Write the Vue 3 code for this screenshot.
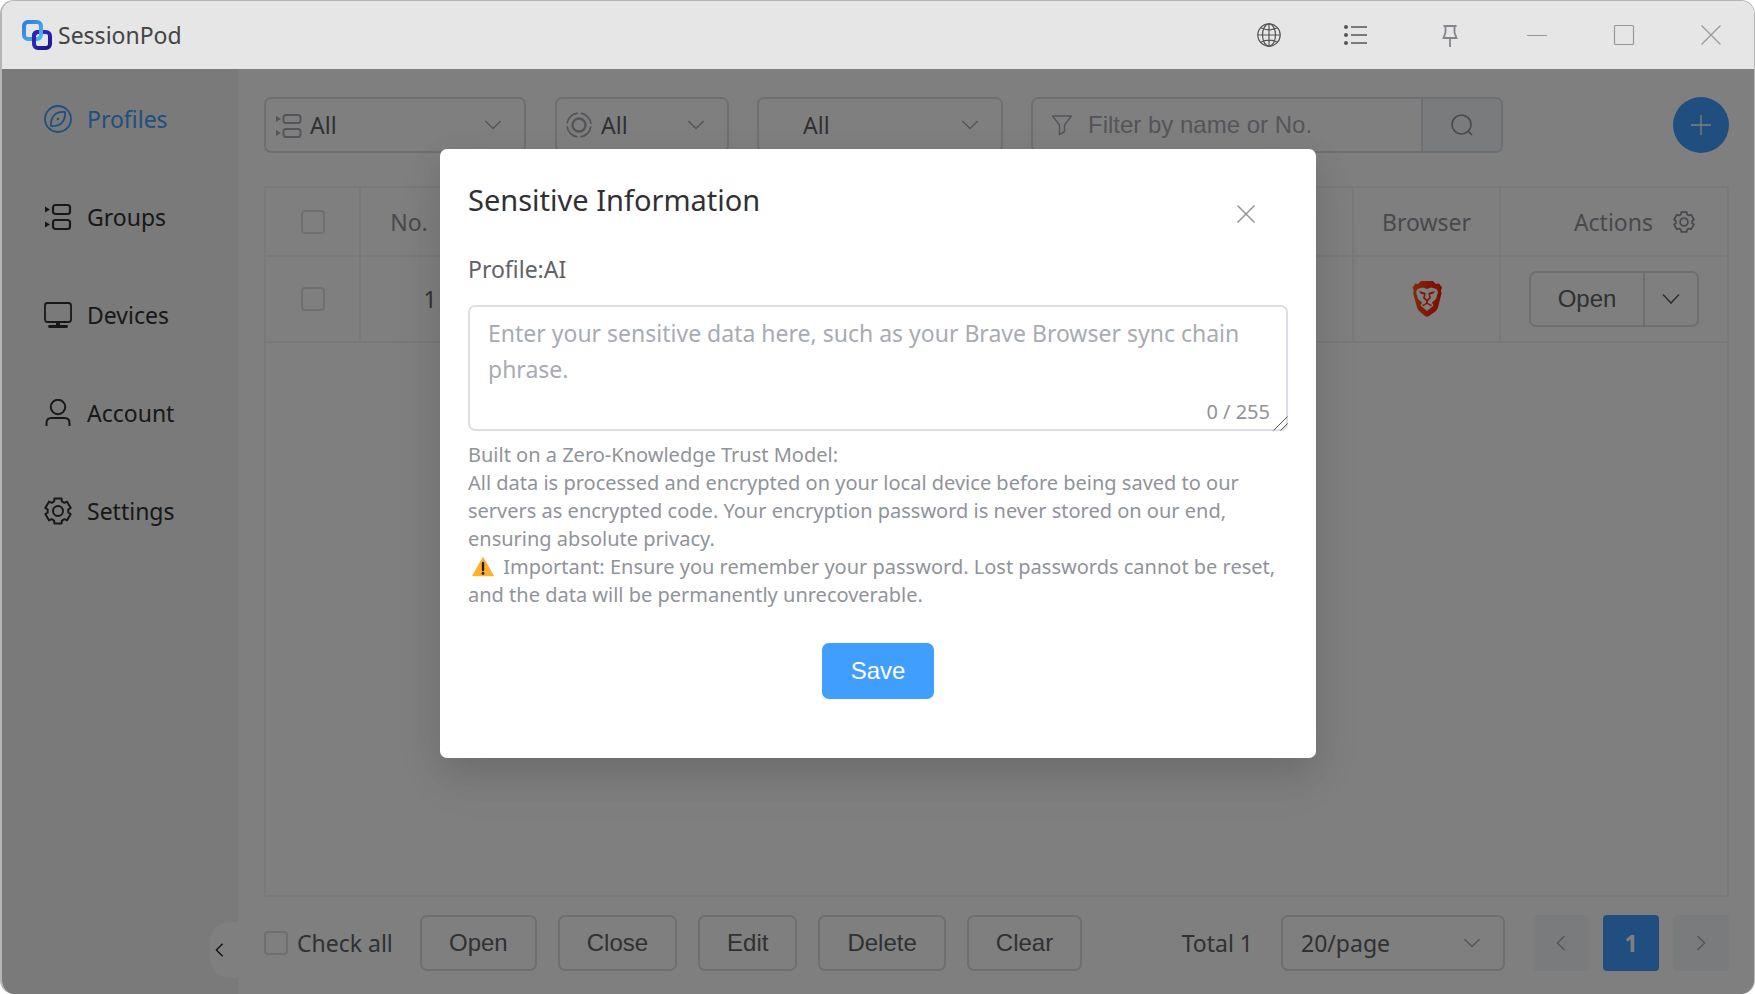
<script setup>
import { ref } from 'vue'

const menu = [
  { id: 'profiles', label: 'Profiles' },
  { id: 'groups', label: 'Groups' },
  { id: 'devices', label: 'Devices' },
  { id: 'account', label: 'Account' },
  { id: 'settings', label: 'Settings' },
]
const active = ref('profiles')

const bulkActions = ['Open', 'Close', 'Edit', 'Delete', 'Clear']
const rows = ref([{ no: 1 }])

const keyword = ref('')
const checkAll = ref(false)
const showDialog = ref(true)
const secret = ref('')

// outline of a six-tooth gear centred on 14,14
function gear() {
  const pts = []
  for (let k = 0; k < 6; k++) {
    for (const [deg, r] of [[-16, 13], [16, 13], [22, 10.4], [38, 10.4]]) {
      const a = ((k * 60 + deg) * Math.PI) / 180
      pts.push((14 + r * Math.sin(a)).toFixed(2) + ' ' + (14 - r * Math.cos(a)).toFixed(2))
    }
  }
  return 'M' + pts.join('L') + 'Z'
}
const gearPath = gear()
</script>

<template>
  <div class="window">
    <header class="titlebar">
      <svg class="logo" viewBox="0 0 30 30">
        <defs>
          <linearGradient id="lg1" x1="0" y1="0" x2="1" y2="1">
            <stop offset="0" stop-color="#2f7de0" />
            <stop offset="1" stop-color="#45b8f5" />
          </linearGradient>
          <linearGradient id="lg2" x1="0" y1="0" x2="1" y2="1">
            <stop offset="0" stop-color="#3a2fd0" />
            <stop offset="1" stop-color="#1c1590" />
          </linearGradient>
        </defs>
        <rect x="12" y="12" width="16" height="16" rx="4" fill="none" stroke="url(#lg2)" stroke-width="4" />
        <rect x="2" y="2" width="17" height="17" rx="4" fill="none" stroke="url(#lg1)" stroke-width="4" />
        <path d="M12 21v-5q0-4 4-4h1" fill="none" stroke="#2d24b4" stroke-width="4" />
      </svg>
      <span class="app-name">SessionPod</span>
      <div class="tools">
        <button type="button" aria-label="Language">
          <svg viewBox="0 0 24 24" stroke="#555" stroke-width="1.2">
            <circle cx="12" cy="12" r="11.2" />
            <ellipse cx="12" cy="12" rx="6.5" ry="11.2" />
            <path d="M12 .8v22.4M.8 12h22.4M3.6 4.8q8.4 4 16.8 0M3.6 19.2q8.4-4 16.8 0" />
          </svg>
        </button>
        <button type="button" aria-label="Menu">
          <svg viewBox="0 0 24 24" stroke="#555" stroke-width="1.6">
            <path d="M7 4h16M7 12h16M7 20h16" />
            <g fill="#555" stroke="none">
              <circle cx="2" cy="4" r="2" /><circle cx="2" cy="12" r="2" /><circle cx="2" cy="20" r="2" />
            </g>
          </svg>
        </button>
      </div>
      <div class="tools">
        <button type="button" aria-label="Pin">
          <svg viewBox="0 0 24 24" stroke="#84848c" stroke-width="1.8">
            <path d="M5.5 3h13M7.5 3v6.5L5.5 15h13l-2-5.500V3M12 15v9" />
          </svg>
        </button>
        <button type="button" aria-label="Minimize">
          <svg viewBox="0 0 24 24" stroke="#999" stroke-width="1.2"><path d="M2 12.500h20" /></svg>
        </button>
        <button type="button" aria-label="Maximize">
          <svg viewBox="0 0 24 24" stroke="#999" stroke-width="1.2">
            <rect x="2.500" y="2.500" width="19" height="19" rx="1" />
          </svg>
        </button>
        <button type="button" aria-label="Close window">
          <svg viewBox="0 0 24 24" stroke="#999" stroke-width="1.2"><path d="M2.500 2.500l19 19M21.500 2.500l-19 19" /></svg>
        </button>
      </div>
    </header>

    <div class="body">
      <nav class="sidebar">
        <a
          v-for="m in menu"
          :key="m.id"
          href="#"
          :class="{ active: active === m.id }"
          @click.prevent="active = m.id"
        >
          <svg viewBox="0 0 28 28" stroke="currentColor" stroke-width="1.8">
            <template v-if="m.id === 'profiles'">
              <circle cx="14" cy="14" r="13" />
              <path d="M21 7Q12.500 6.500 9.500 11 6.500 15 7 21 15.500 21.500 18.500 17 21.500 13 21 7z" />
              <circle cx="14" cy="14" r="1.200" fill="currentColor" stroke="none" />
            </template>
            <template v-else-if="m.id === 'groups'">
              <rect x="9" y="2" width="17" height="9" rx="2.500" stroke-width="2.200" />
              <rect x="9" y="17" width="17" height="9" rx="2.500" stroke-width="2.200" />
              <path d="M1 3.500l5 3-5 3zM1 18.500l5 3-5 3z" fill="currentColor" stroke="none" />
            </template>
            <template v-else-if="m.id === 'devices'">
              <rect x="1" y="2" width="26" height="19" rx="2.500" />
              <path d="M14 21v4" stroke-width="4" />
              <path d="M5.500 25.500h17" stroke-width="2.800" stroke-linecap="round" />
            </template>
            <template v-else-if="m.id === 'account'">
              <circle cx="14" cy="8" r="7.200" stroke-width="2" />
              <path d="M2.500 27v-3q0-5 5-5h13q5 0 5 5v3" stroke-width="2" />
            </template>
            <template v-else>
              <path :d="gearPath" stroke-width="2" stroke-linejoin="round" />
              <circle cx="14" cy="14" r="5" stroke-width="2" />
            </template>
          </svg>
          <span>{{ m.label }}</span>
        </a>
        <button type="button" class="collapse" aria-label="Collapse menu">
          <svg viewBox="0 0 10 16" stroke="#222" stroke-width="1.5"><path d="M8.500 1L1.500 8l7 7" /></svg>
        </button>
      </nav>

      <main class="content">
        <div class="toolbar">
          <div class="select group-select">
            <svg class="prefix" viewBox="0 0 28 28" stroke="#a8abb2" stroke-width="2">
              <rect x="9.500" y="4" width="17" height="8" rx="2.500" />
              <rect x="9.500" y="18" width="17" height="8" rx="2.500" />
              <path d="M2 5l5 3-5 3zM2 19l5 3-5 3z" fill="#a8abb2" stroke="none" />
            </svg>
            <select aria-label="Group"><option>All</option></select>
            <svg class="arrow" viewBox="0 0 20 12"><path d="M1.500 1.500L10 10l8.500-8.500" /></svg>
          </div>
          <div class="select browser-select">
            <svg class="prefix" viewBox="0 0 28 28" stroke="#a8abb2" stroke-width="1.8">
              <circle cx="14" cy="14" r="6.500" stroke-width="2.400" />
              <circle cx="14" cy="14" r="12" stroke-dasharray="15.800 3.050" stroke-dashoffset="-1.500" />
            </svg>
            <select aria-label="Browser"><option>All</option></select>
            <svg class="arrow" viewBox="0 0 20 12"><path d="M1.500 1.500L10 10l8.500-8.500" /></svg>
          </div>
          <div class="select device-select">
            <select aria-label="Device"><option>All</option></select>
            <svg class="arrow" viewBox="0 0 20 12"><path d="M1.500 1.500L10 10l8.500-8.500" /></svg>
          </div>
          <div class="search">
            <svg viewBox="0 0 22 22" stroke="#a8abb2" stroke-width="1.500">
              <path d="M1.500 2h19L13.500 11v6.500l-5 3V11z" stroke-linejoin="round" />
            </svg>
            <input v-model="keyword" type="text" placeholder="Filter by name or No." aria-label="Filter by name or No." />
            <button type="button" aria-label="Search">
              <svg viewBox="0 0 22 22" stroke="#909399" stroke-width="1.700">
                <circle cx="10.500" cy="10.500" r="9.500" /><path d="M17 17l4 4" />
              </svg>
            </button>
          </div>
          <button type="button" class="add" aria-label="Add profile">
            <svg viewBox="0 0 20 20" stroke="#fff" stroke-width="1.300"><path d="M10 0v20M0 10h20" /></svg>
          </button>
        </div>

        <div class="table-wrap">
          <table>
            <colgroup>
              <col class="c-check" /><col class="c-no" /><col /><col class="c-browser" /><col class="c-actions" />
            </colgroup>
            <thead>
              <tr>
                <th><input type="checkbox" aria-label="Select all rows" /></th>
                <th><span class="sortable">No.</span></th>
                <th></th>
                <th>Browser</th>
                <th>
                  <div class="actions-head">
                    Actions
                    <button type="button" class="plain" aria-label="Table settings">
                      <svg viewBox="0 0 28 28" stroke="#909399" stroke-width="2.200" stroke-linejoin="round">
                        <path :d="gearPath" /><circle cx="14" cy="14" r="5" />
                      </svg>
                    </button>
                  </div>
                </th>
              </tr>
            </thead>
            <tbody>
              <tr v-for="r in rows" :key="r.no">
                <td><input type="checkbox" :aria-label="'Select row ' + r.no" /></td>
                <td>{{ r.no }}</td>
                <td></td>
                <td>
                  <svg class="brave" viewBox="0 0 30 36">
                    <defs>
                      <linearGradient id="bv" x1="0" y1="0" x2="1" y2="0">
                        <stop offset="0" stop-color="#ff5a14" />
                        <stop offset=".6" stop-color="#ff2a0c" />
                        <stop offset="1" stop-color="#f02000" />
                      </linearGradient>
                    </defs>
                    <path
                      fill="url(#bv)"
                      d="M9 0h12l3 3 3-.5 3 4-1 3 .5 3-3.500 14q-.8 2.500-3 4.200L17 35q-2 1.500-4 0l-5-4.300Q5.800 29 5 26.500L1.200 12.500l.5-3L.5 6.500l3-4L6 3z"
                    />
                    <path
                      fill="#fff"
                      d="M15 8l4-1.500 5.500 1.500 1.500 3-2 7-4 3.500 1.500 3L15 30l-6.500-5.500 1.500-3L6 18l-2-7 1.500-3L11 6.500z"
                    />
                    <path
                      fill="#fb3010"
                      d="M7 10l5.500 1.500 1.300 1-1 4 2.200 2 2.200-2-1-4 1.300-1L23 10l-1.500 2.500-3.500 1 1 3.500-3 3v2l4 2-1 1.200-4-2.200-4 2.200-1-1.200 4-2v-2l-3-3 1-3.500-3.500-1z"
                    />
                  </svg>
                </td>
                <td>
                  <div class="split">
                    <button type="button">Open</button>
                    <button type="button" aria-label="More actions">
                      <svg viewBox="0 0 20 12" stroke="#606266" stroke-width="1.600"><path d="M2 1.500l8 8.500 8-8.500" /></svg>
                    </button>
                  </div>
                </td>
              </tr>
            </tbody>
          </table>
        </div>

        <footer class="footer">
          <label class="check-all"><input v-model="checkAll" type="checkbox" />Check all</label>
          <div class="bulk">
            <button v-for="b in bulkActions" :key="b" type="button" class="btn">{{ b }}</button>
          </div>
          <div class="pagination">
            <span class="total">Total {{ rows.length }}</span>
            <div class="select size-select">
              <select aria-label="Page size"><option>20/page</option></select>
              <svg class="arrow" viewBox="0 0 20 12"><path d="M1.500 1.500L10 10l8.500-8.500" /></svg>
            </div>
            <div class="pager">
              <button type="button" disabled aria-label="Previous page">
                <svg viewBox="0 0 10 16" stroke="#a8abb2" stroke-width="1.500"><path d="M8.500 1L1.500 8l7 7" /></svg>
              </button>
              <button type="button" class="current">1</button>
              <button type="button" disabled aria-label="Next page">
                <svg viewBox="0 0 10 16" stroke="#a8abb2" stroke-width="1.500"><path d="M1.500 1l7 7-7 7" /></svg>
              </button>
            </div>
          </div>
        </footer>
      </main>

      <div v-if="showDialog" class="overlay">
        <section class="dialog" role="dialog" aria-labelledby="dialog-title">
          <div class="dialog-head">
            <h2 id="dialog-title">Sensitive Information</h2>
            <button type="button" class="plain" aria-label="Close dialog" @click="showDialog = false">
              <svg viewBox="0 0 20 20" stroke="#909399" stroke-width="1.500"><path d="M1.500 1.500l17 17M18.500 1.500l-17 17" /></svg>
            </button>
          </div>
          <label class="profile" for="secret">Profile:AI</label>
          <div class="secret">
            <textarea
              id="secret"
              v-model="secret"
              maxlength="255"
              placeholder="Enter your sensitive data here, such as your Brave Browser sync chain phrase."
            ></textarea>
            <span class="count">{{ secret.length }} / 255</span>
            <svg class="grip" viewBox="0 0 15 15" stroke="#555"><path d="M.5 14.500l14-14M7.500 14.500l7-7" /></svg>
          </div>
          <p class="hint">
            Built on a Zero-Knowledge Trust Model:<br />
            All data is processed and encrypted on your local device before being saved to our<br />
            servers as encrypted code. Your encryption password is never stored on our end,<br />
            ensuring absolute privacy.<br />
            <svg class="warn" viewBox="0 0 22 20">
              <path d="M11 1L21 18.500H1z" fill="#ffb02e" stroke="#ffb02e" stroke-width="1.500" stroke-linejoin="round" />
              <path d="M11 6v7" stroke="#222" stroke-width="2.400" stroke-linecap="round" />
              <circle cx="11" cy="16.500" r="1.400" fill="#222" />
            </svg>
            Important: Ensure you remember your password. Lost passwords cannot be reset,<br />
            and the data will be permanently unrecoverable.
          </p>
          <button type="button" class="btn save">Save</button>
        </section>
      </div>
    </div>
  </div>
</template>

<style>
body {
  background: #fff;
}
</style>

<style scoped>
.window {
  display: flex;
  flex-direction: column;
  height: 100vh;
  box-sizing: border-box;
  border: 2px solid #b5b5b5;
  border-width: 1px 1px 0 2px;
  border-radius: 14px;
  overflow: hidden;
  font-family: 'Noto Sans', sans-serif;
  font-size: 23px;
  color: #606266;
  background: #fff;
}
svg {
  fill: none;
  display: block;
}
button,
input,
select,
textarea {
  box-sizing: border-box;
  margin: 0;
  font: inherit;
  color: inherit;
}
button {
  display: flex;
  align-items: center;
  justify-content: center;
  padding: 0;
  border: 0;
  background: none;
  cursor: pointer;
}

/* title bar */
.titlebar {
  display: flex;
  align-items: center;
  height: 68px;
  flex: none;
  padding-left: 20px;
  background: #e6e6e6;
}
.logo {
  width: 30px;
  height: 30px;
}
.app-name {
  flex: 1;
  margin-left: 6px;
  color: #444;
}
.tools {
  display: flex;
}
.tools + .tools {
  margin-left: 7px;
}
.tools button {
  width: 87px;
  height: 68px;
}
.tools svg {
  width: 24px;
  height: 24px;
}

/* body */
.body {
  position: relative;
  display: flex;
  flex: 1;
  min-height: 0;
}
.sidebar {
  position: relative;
  display: flex;
  flex-direction: column;
  width: 236px;
  flex: none;
  box-sizing: border-box;
  padding-top: 1px;
  background: #f4f4f4;
}
.sidebar a {
  display: flex;
  align-items: center;
  height: 98px;
  padding-left: 42px;
  gap: 15px;
  color: #303133;
  text-decoration: none;
}
.sidebar a.active {
  color: #409eff;
}
.sidebar a svg {
  width: 28px;
  height: 28px;
}
.collapse {
  position: absolute;
  right: 0;
  bottom: 16px;
  width: 28px;
  height: 56px;
  padding-right: 10px;
  border-radius: 20px 0 0 20px;
  background: #fff;
}
.collapse svg {
  width: 9px;
  height: 16px;
}
.content {
  display: flex;
  flex-direction: column;
  flex: 1;
  min-width: 0;
  padding: 28px 25px 23px 26px;
}

/* toolbar */
.toolbar {
  display: flex;
  align-items: center;
}
.select {
  position: relative;
}
.select select {
  width: 100%;
  height: 56px;
  padding: 0 44px 0 18px;
  border: 2px solid #dcdfe6;
  border-radius: 7px;
  background: #fff;
  appearance: none;
}
.prefix {
  position: absolute;
  left: 10px;
  top: 14px;
  width: 28px;
  height: 28px;
}
.arrow {
  position: absolute;
  right: 24px;
  top: 22px;
  width: 18px;
  height: 12px;
  stroke: #a8abb2;
  stroke-width: 1.6;
}
.group-select {
  width: 262px;
}
.browser-select {
  width: 174px;
  margin-left: 29px;
}
.group-select select,
.browser-select select,
.device-select select {
  padding-left: 44px;
}
.device-select {
  width: 246px;
  margin-left: 28px;
}
.search {
  display: flex;
  align-items: center;
  width: 472px;
  height: 56px;
  box-sizing: border-box;
  margin-left: 28px;
  padding-left: 18px;
  border: 2px solid #dcdfe6;
  border-radius: 7px;
  overflow: hidden;
}
.search svg {
  width: 22px;
  height: 22px;
  flex: none;
}
.search input {
  flex: 1;
  min-width: 0;
  height: 52px;
  padding: 0 0 0 15px;
  border: 0;
  outline: 0;
  background: none;
  font-family: 'Liberation Sans', sans-serif;
  font-size: 24px;
}
.search input::placeholder {
  color: #a8abb2;
}
.search button {
  width: 80px;
  height: 52px;
  border-left: 2px solid #dcdfe6;
  background: #f5f7fa;
}
.add {
  width: 56px;
  height: 56px;
  margin-left: auto;
  border-radius: 50%;
  background: #409eff;
}
.add svg {
  width: 20px;
  height: 20px;
}

/* table */
.table-wrap {
  flex: 1;
  min-height: 0;
  margin-top: 33px;
  border: 2px solid #f0f2f7;
}
table {
  width: 100%;
  table-layout: fixed;
  border-collapse: collapse;
}
.c-check {
  width: 94px;
}
.c-no {
  width: 140px;
}
.c-browser {
  width: 147px;
}
.c-actions {
  width: 227px;
}
th,
td {
  box-sizing: border-box;
  padding: 0;
  border-right: 2px solid #f0f2f7;
  border-bottom: 2px solid #f0f2f7;
  text-align: center;
}
th:last-child,
td:last-child {
  border-right: 0;
}
th {
  height: 68px;
  font-weight: 400;
  color: #909399;
}
td {
  height: 86px;
}
input[type='checkbox'] {
  display: block;
  width: 24px;
  height: 24px;
  margin: 0 auto;
  border: 2px solid #dcdfe6;
  border-radius: 4px;
  background: #fff;
  appearance: none;
}
.sortable {
  padding-right: 42px;
}
.actions-head {
  display: flex;
  align-items: center;
  justify-content: flex-end;
  gap: 20px;
  padding-right: 32px;
}
.actions-head svg {
  width: 22px;
  height: 22px;
}
.brave {
  width: 30px;
  height: 36px;
  margin: 0 auto;
}
.split {
  display: flex;
  width: 170px;
  height: 56px;
  box-sizing: border-box;
  margin: 0 auto;
  border: 2px solid #dcdfe6;
  border-radius: 7px;
  font-family: 'Liberation Sans', sans-serif;
  font-size: 24px;
}
.split button:first-child {
  flex: 1;
}
.split button:last-child {
  width: 54px;
  border-left: 2px solid #dcdfe6;
}
.split svg {
  width: 20px;
  height: 12px;
}

/* footer */
.footer {
  display: flex;
  align-items: center;
  margin-top: 18px;
}
.check-all {
  display: flex;
  align-items: center;
  gap: 9px;
  width: 156px;
  white-space: nowrap;
}
.check-all input[type='checkbox'] {
  margin: 0;
}
.bulk {
  display: flex;
  gap: 21px;
}
.btn {
  height: 56px;
  padding: 0 27px;
  border: 2px solid #dcdfe6;
  border-radius: 7px;
  font-family: 'Liberation Sans', sans-serif;
  font-size: 24px;
}
.pagination {
  display: flex;
  align-items: center;
  gap: 28px;
  margin-left: auto;
}
.size-select {
  width: 224px;
}
.pager {
  display: flex;
  gap: 14px;
}
.pager button {
  width: 56px;
  height: 56px;
  border-radius: 4px;
  background: #f5f7fa;
}
.pager .current {
  background: #409eff;
  color: #fff;
  font-weight: 700;
}
.pager svg {
  width: 10px;
  height: 16px;
}

/* dialog */
.overlay {
  position: absolute;
  inset: 0;
  background: rgba(0, 0, 0, 0.5);
}
.dialog {
  display: flex;
  flex-direction: column;
  width: 50%;
  box-sizing: border-box;
  margin: 80px auto 0;
  padding: 28px 28px 59px;
  border-radius: 7px;
  background: #fff;
  box-shadow: 0 21px 56px rgba(0, 0, 0, 0.06), 0 14px 35px rgba(0, 0, 0, 0.1);
}
.dialog-head {
  display: flex;
  justify-content: space-between;
  height: 74px;
}
.dialog-head h2 {
  margin: 0;
  font-size: 29px;
  font-weight: 400;
  line-height: 46px;
  color: #303133;
}
.dialog-head .plain {
  width: 84px;
  height: 74px;
}
.dialog-head svg {
  width: 20px;
  height: 20px;
}
.profile {
  line-height: 36px;
}
.secret {
  position: relative;
  margin-top: 18px;
}
.secret textarea {
  display: block;
  width: 100%;
  height: 126px;
  padding: 8px 18px;
  border: 2px solid #dcdfe6;
  border-radius: 7px;
  outline: 0;
  line-height: 36px;
  resize: none;
}
.secret textarea::placeholder {
  color: #a8abb2;
}
.count {
  position: absolute;
  right: 18px;
  bottom: 6px;
  font-size: 20px;
  line-height: 26px;
  color: #909399;
}
.grip {
  position: absolute;
  right: 0;
  bottom: 0;
  width: 15px;
  height: 15px;
}
.hint {
  margin: 10px 0 0;
  font-size: 20px;
  line-height: 28px;
  color: #909399;
  white-space: nowrap;
}
.warn {
  display: inline-block;
  width: 22px;
  height: 20px;
  margin: 0 4px;
  vertical-align: -3px;
}
.save {
  align-self: center;
  margin-top: 34px;
  border-color: #409eff;
  background: #409eff;
  color: #fff;
}
</style>
